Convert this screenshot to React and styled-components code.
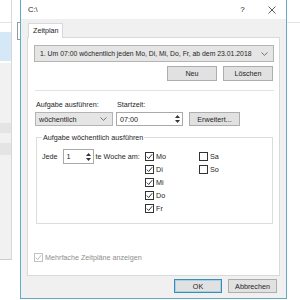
import React from 'react'
import styled, { createGlobalStyle } from 'styled-components'

const GlobalStyle = createGlobalStyle`
  html, body {
    margin: 0;
    padding: 0;
    background: #fff;
  }
  body {
    font-family: "Liberation Sans", Arial, sans-serif;
    font-size: 7.2px;
    color: #1e1e1e;
  }
  #root {
    width: 300px;
    height: 300px;
    overflow: hidden;
  }
`

const Screen = styled.div`
  display: flex;
  width: 300px;
  height: 300px;
  background: #fff;
`

/* window behind the dialog */
const BackLeft = styled.div`
  width: 20px;
  flex-shrink: 0;
  display: flex;
`
const BackList = styled.div`
  width: 12px;
  height: 260px;
  box-sizing: border-box;
  border-right: 1px solid #d8d8d8;
  border-bottom: 1px solid #cdcdcd;
  display: flex;
  flex-direction: column;
`
const BackHeader = styled.div`
  height: 22px;
  flex-shrink: 0;
  border-bottom: 1px solid #e4e4e4;
  margin-bottom: 9px;
`
const BackSelected = styled.div`
  height: 29px;
  flex-shrink: 0;
  background: #d5e8f8;
  margin-bottom: 2px;
`
const BackGrey = styled.div`
  flex: 1;
  background: #f1f1f1;
  padding-top: 60px;
`
const BackBand = styled.div`
  height: ${p => p.h}px;
  margin-bottom: ${p => p.mb}px;
  background: #e4e4e4;
`
const BackGutter = styled.div`
  flex: 1;
  display: flex;
  justify-content: flex-end;
`
const Grip = styled.div`
  width: 2px;
  height: 16px;
  margin-top: 22px;
  border: 1px solid #8f9ca4;
  border-right: none;
`
const BackRight = styled.div`
  flex: 1;
`
const BackRightHeader = styled.div`
  height: 22px;
  border-bottom: 1px solid #e4e4e4;
`

/* dialog */
const Dialog = styled.div`
  width: 267px;
  height: 299px;
  flex-shrink: 0;
  box-sizing: border-box;
  border: 1px solid #64aac2;
  border-top: none;
  background: #f0f0f0;
  display: flex;
  flex-direction: column;
`
const TitleBar = styled.div`
  height: 19px;
  flex-shrink: 0;
  background: #fff;
  display: flex;
  align-items: center;
  padding-left: 7px;
  font-size: 7.6px;
`
const TitleButtons = styled.div`
  margin-left: auto;
  display: flex;
`
const TitleButton = styled.div`
  width: 29px;
  height: 19px;
  display: flex;
  align-items: center;
  justify-content: center;
  font-size: 8px;
  color: #222;
`
const Body = styled.div`
  flex: 1;
  display: flex;
  flex-direction: column;
  padding: 4px 6px 0 6px;
`
const TabStrip = styled.div`
  display: flex;
`
const Tab = styled.div`
  position: relative;
  z-index: 1;
  margin-left: 1px;
  margin-bottom: -1px;
  width: 35px;
  height: 15px;
  box-sizing: border-box;
  padding-left: 4px;
  line-height: 14px;
  background: #fff;
  border: 1px solid #d9d9d9;
  border-bottom: none;
`
const Panel = styled.div`
  height: 239px;
  box-sizing: border-box;
  background: #fff;
  border: 1px solid #d9d9d9;
  padding: 7px 5px 9px 6px;
  display: flex;
  flex-direction: column;
`
const Combo = styled.div`
  height: 17px;
  box-sizing: border-box;
  background: #e5e5e5;
  border: 1px solid #b4b4b4;
  display: flex;
  align-items: center;
  padding: 0 5px 0 5px;
  white-space: nowrap;
  font-size: 6.85px;
`
const ComboText = styled.span`
  flex: 1;
`
const ButtonRow = styled.div`
  display: flex;
  justify-content: flex-end;
  gap: 6px;
  margin-top: 4px;
  padding-right: 1px;
`
const Button = styled.div`
  width: ${p => p.w || 50}px;
  height: ${p => p.h || 15}px;
  box-sizing: border-box;
  background: #e1e1e1;
  border: 1px solid ${p => (p.primary ? '#3b8cb8' : '#adadad')};
  box-shadow: ${p => (p.primary ? 'inset 0 0 0 1px #a8d2e6' : 'none')};
  display: flex;
  align-items: center;
  justify-content: center;
  margin-left: ${p => p.ml || 0}px;
`
const Separator = styled.div`
  height: 1px;
  background: #e2e2e2;
  margin: 9px 0 0 1px;
`
const FieldRow = styled.div`
  display: flex;
  align-items: flex-end;
  margin-top: 9px;
  margin-left: 1px;
`
const Field = styled.div`
  display: flex;
  flex-direction: column;
  margin-right: ${p => p.mr || 0}px;
`
const Label = styled.div`
  height: 9px;
  line-height: 9px;
  margin-bottom: 3px;
  padding-left: 1px;
  white-space: nowrap;
`
const Select = styled.div`
  width: 78px;
  height: 14px;
  box-sizing: border-box;
  background: #e5e5e5;
  border: 1px solid #b4b4b4;
  display: flex;
  align-items: center;
  padding: 0 5px 0 3px;
`
const SpinBox = styled.div`
  width: ${p => p.w}px;
  height: ${p => p.h || 14}px;
  box-sizing: border-box;
  background: #fff;
  border: 1px solid #a9a9a9;
  display: flex;
  align-items: center;
  padding-left: 3px;
`
const SpinValue = styled.span`
  flex: 1;
`
const SpinArrows = styled.div`
  width: 9px;
  height: 100%;
  display: flex;
  flex-direction: column;
  align-items: center;
  justify-content: center;
  gap: 2px;
`
const Group = styled.fieldset`
  margin: 7px 0 0 2px;
  width: 237px;
  box-sizing: border-box;
  border: 1px solid #dcdcdc;
  padding: 7px 0 6px 5px;
`
const Legend = styled.legend`
  padding: 0 1px;
  line-height: 9px;
`
const GroupGrid = styled.div`
  display: grid;
  grid-template-columns: 103px 54px auto;
  align-items: start;
`
const JedeRow = styled.div`
  display: flex;
  align-items: center;
  white-space: nowrap;
`
const Gap = styled.span`
  display: inline-block;
  width: ${p => p.w}px;
`
const CheckColumn = styled.div`
  display: flex;
  flex-direction: column;
  margin-top: 3px;
`
const CheckRow = styled.div`
  height: 13px;
  display: flex;
  align-items: flex-start;
  color: ${p => (p.disabled ? '#8e8e8e' : 'inherit')};
  margin-top: ${p => (p.push ? 'auto' : '0')};
`
const Box = styled.div`
  width: 9px;
  height: 9px;
  box-sizing: border-box;
  border: 1px solid ${p => (p.disabled ? '#c2c2c2' : '#333')};
  background: #fff;
  margin-right: 2px;
  display: flex;
  align-items: center;
  justify-content: center;
`
const CheckText = styled.span`
  line-height: 9px;
`
const Footer = styled.div`
  flex: 1;
  display: flex;
  justify-content: flex-end;
  align-items: flex-start;
  padding: 3px 3px 0 0;
`

function Tick({ color = '#222' }) {
  return (
    <svg width="7" height="7" viewBox="0 0 7 7">
      <polyline points="0.8,3.6 2.7,5.5 6.2,1.2" fill="none" stroke={color} strokeWidth="0.9" />
    </svg>
  )
}

function Chevron() {
  return (
    <svg width="7" height="4" viewBox="0 0 7 4">
      <polyline points="0.5,0.5 3.5,3.3 6.5,0.5" fill="none" stroke="#555" strokeWidth="0.8" />
    </svg>
  )
}

function Arrows() {
  return (
    <SpinArrows>
      <svg width="5" height="3" viewBox="0 0 5 3">
        <polygon points="0,3 2.5,0 5,3" fill="#333" />
      </svg>
      <svg width="5" height="3" viewBox="0 0 5 3">
        <polygon points="0,0 5,0 2.5,3" fill="#333" />
      </svg>
    </SpinArrows>
  )
}

function Check({ label, checked, disabled, push }) {
  return (
    <CheckRow disabled={disabled} push={push}>
      <Box disabled={disabled}>{checked && <Tick color={disabled ? '#b5b5b5' : '#222'} />}</Box>
      <CheckText>{label}</CheckText>
    </CheckRow>
  )
}

export default function App() {
  return (
    <Screen>
      <GlobalStyle />
      <BackLeft>
        <BackList>
          <BackHeader />
          <BackSelected />
          <BackGrey>
            <BackBand h={10} mb={10} />
            <BackBand h={12} mb={0} />
          </BackGrey>
        </BackList>
        <BackGutter>
          <Grip />
        </BackGutter>
      </BackLeft>

      <Dialog>
        <TitleBar>
          C:\
          <TitleButtons>
            <TitleButton>?</TitleButton>
            <TitleButton>
              <svg width="8" height="8" viewBox="0 0 8 8">
                <path d="M0.5 0.5 L7.5 7.5 M7.5 0.5 L0.5 7.5" stroke="#333" strokeWidth="0.8" />
              </svg>
            </TitleButton>
          </TitleButtons>
        </TitleBar>

        <Body>
          <TabStrip>
            <Tab>Zeitplan</Tab>
          </TabStrip>
          <Panel>
            <Combo>
              <ComboText>1. Um 07:00 wöchentlich jeden Mo, Di, Mi, Do, Fr, ab dem 23.01.2018</ComboText>
              <Chevron />
            </Combo>
            <ButtonRow>
              <Button>Neu</Button>
              <Button>Löschen</Button>
            </ButtonRow>
            <Separator />

            <FieldRow>
              <Field mr={3}>
                <Label>Aufgabe ausführen:</Label>
                <Select>
                  <SpinValue>wöchentlich</SpinValue>
                  <Chevron />
                </Select>
              </Field>
              <Field>
                <Label>Startzeit:</Label>
                <SpinBox w={67}>
                  <SpinValue>07:00</SpinValue>
                  <Arrows />
                </SpinBox>
              </Field>
              <Button w={51} h={14} ml={6}>Erweitert...</Button>
            </FieldRow>

            <Group>
              <Legend>Aufgabe wöchentlich ausführen</Legend>
              <GroupGrid>
                <JedeRow>
                  Jede
                  <Gap w={5} />
                  <SpinBox w={31} h={15}>
                    <SpinValue>1</SpinValue>
                    <Arrows />
                  </SpinBox>
                  <Gap w={2} />
                  te Woche am:
                </JedeRow>
                <CheckColumn>
                  <Check label="Mo" checked />
                  <Check label="Di" checked />
                  <Check label="Mi" checked />
                  <Check label="Do" checked />
                  <Check label="Fr" checked />
                </CheckColumn>
                <CheckColumn>
                  <Check label="Sa" />
                  <Check label="So" />
                </CheckColumn>
              </GroupGrid>
            </Group>

            <Check label="Mehrfache Zeitpläne anzeigen" checked disabled push />
          </Panel>
          <Footer>
            <Button primary w={48} h={14}>OK</Button>
            <Button w={49} h={14} ml={6}>Abbrechen</Button>
          </Footer>
        </Body>
      </Dialog>

      <BackRight>
        <BackRightHeader />
      </BackRight>
    </Screen>
  )
}
